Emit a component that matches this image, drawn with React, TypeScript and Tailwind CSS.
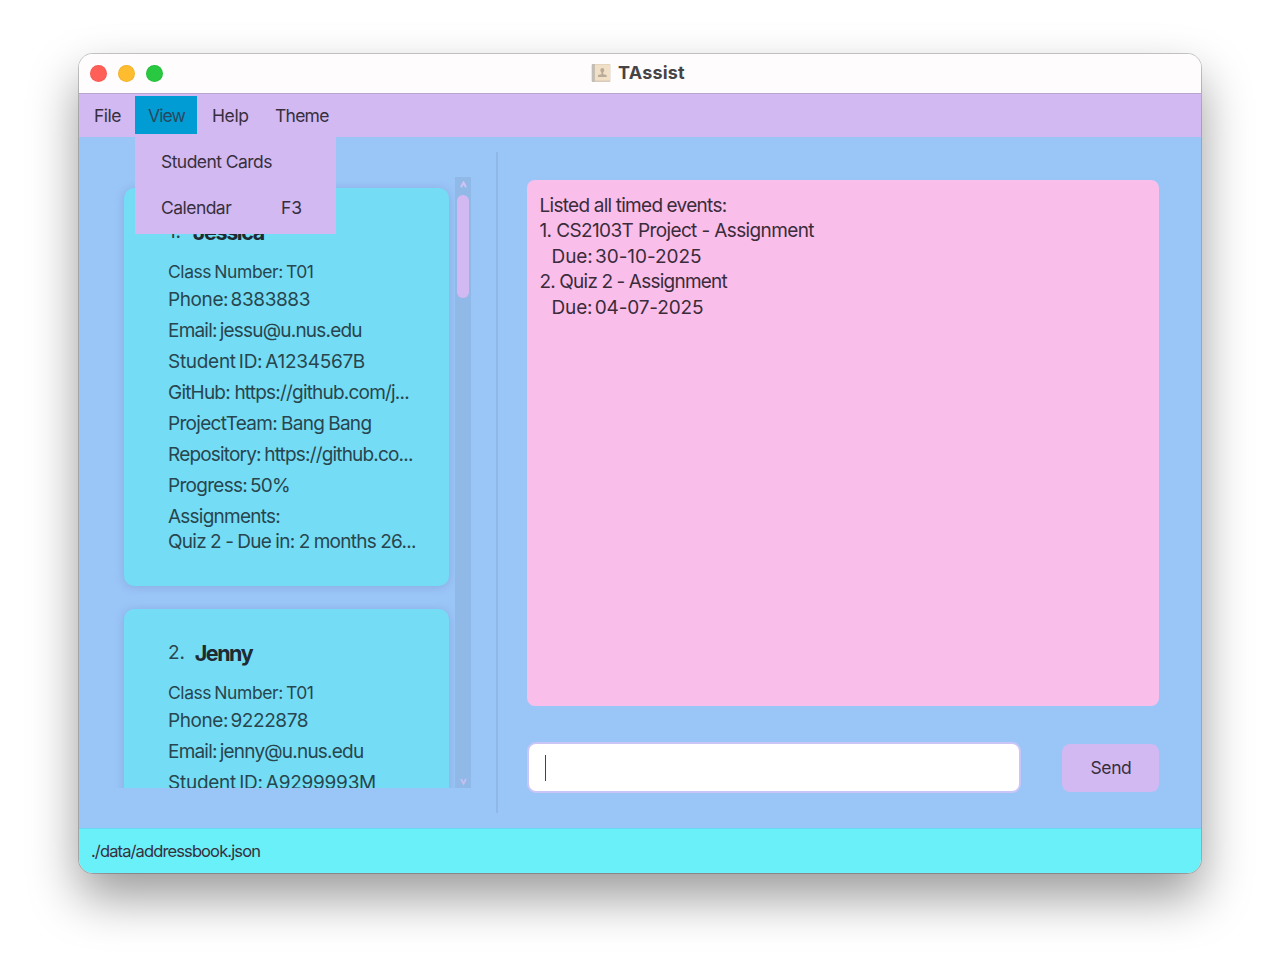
type Line = { text: string; className: string };
type Student = { index: string; name: string; nameClass: string; lines: Line[] };

const students: Student[] = [
  {
    index: '1.',
    name: 'Jessica',
    nameClass: 'ml-3 tracking-[-1.36px]',
    lines: [
      { text: 'Phone: 8383883', className: 'tracking-[-0.4px] [word-spacing:-2.5px]' },
      { text: 'Email: jessu@u.nus.edu', className: 'tracking-[-0.79px] [word-spacing:-1.5px]' },
      { text: 'Student ID: A1234567B', className: 'tracking-[-0.29px] [word-spacing:-2px]' },
      { text: 'GitHub: https://github.com/j...', className: 'tracking-[-0.8px]' },
      { text: 'ProjectTeam: Bang Bang', className: 'tracking-[-0.69px] [word-spacing:-0.7px]' },
      { text: 'Repository: https://github.co...', className: 'tracking-[-0.82px] [word-spacing:-1px]' },
      { text: 'Progress: 50%', className: 'tracking-[-0.71px] [word-spacing:-1.7px]' },
      { text: 'Assignments:', className: 'tracking-[-0.77px]' },
      { text: 'Quiz 2 - Due in: 2 months 26...', className: '-mt-1.5 tracking-[-0.74px] [word-spacing:-0.4px]' },
    ],
  },
  {
    index: '2.',
    name: 'Jenny',
    nameClass: 'ml-[10px] tracking-[-1.45px]',
    lines: [
      { text: 'Phone: 9222878', className: 'tracking-[-0.42px] [word-spacing:-2.5px]' },
      { text: 'Email: jenny@u.nus.edu', className: 'tracking-[-0.79px] [word-spacing:-1.5px]' },
      { text: 'Student ID: A9299993M', className: 'tracking-[-0.25px] [word-spacing:-2px]' },
    ],
  },
];

const messages: Line[] = [
  { text: 'Listed all timed events:', className: 'tracking-[-0.7px] [word-spacing:-0.4px]' },
  { text: '1. CS2103T Project - Assignment', className: 'tracking-[-0.62px]' },
  { text: 'Due: 30-10-2025', className: 'pl-3 tracking-[-0.06px] [word-spacing:-3px]' },
  { text: '2. Quiz 2 - Assignment', className: 'tracking-[-0.76px] [word-spacing:-0.3px]' },
  { text: 'Due: 04-07-2025', className: 'pl-3 tracking-[-0.16px] [word-spacing:-2.8px]' },
];

function AddressBookIcon() {
  return (
    <svg width="20" height="20" viewBox="0 0 20 20" aria-hidden="true">
      <rect x="0.8" y="1" width="18.6" height="18" rx="1" fill="#d9cbb9" />
      <rect x="4" y="1.5" width="15" height="16" rx="0.5" fill="#f1dfc6" />
      <rect x="0.8" y="1" width="3" height="18" rx="0.8" fill="#c3bdb5" />
      <ellipse cx="11.3" cy="7.2" rx="1.9" ry="2.3" fill="#b9ab9a" />
      <path d="M10.4 9h1.8v2.2l3.4.8v1.9H7V12l3.4-.8z" fill="#b9ab9a" />
    </svg>
  );
}

function TitleBar() {
  return (
    <div className="grid h-[39px] shrink-0 grid-cols-[1fr_auto_1fr] items-center bg-[#fefcfd]">
      <div className="flex gap-[11px] pl-[11px]">
        <span className="size-[17px] rounded-full bg-[#ff5f57] ring-1 ring-inset ring-black/5" />
        <span className="size-[17px] rounded-full bg-[#febc2e] ring-1 ring-inset ring-black/5" />
        <span className="size-[17px] rounded-full bg-[#28c840] ring-1 ring-inset ring-black/5" />
      </div>
      <div className="flex items-center gap-[7px] pb-0.5 pr-1">
        <AddressBookIcon />
        <span className="text-[18px] font-bold leading-6 tracking-[0.2px] text-[#464446]">TAssist</span>
      </div>
      <div />
    </div>
  );
}

function MenuBar() {
  return (
    <nav className="relative z-10 flex h-[44px] shrink-0 items-start border-t border-[#b9a5d0] bg-[#d2b9f2] pt-0.5 text-[17.5px] leading-10">
      <span className="w-14 pl-[15px] tracking-[-0.52px]">File</span>
      <div className="relative h-[38px] w-[62px] bg-[#019cd3] pl-[13px] tracking-[-0.93px] text-[#27485f]">
        View
        <div className="absolute left-0 top-[38px] h-[100px] w-[201px] bg-[#d2b9f2] px-[26px] pt-[5px] text-[#382f3e]">
          <div className="h-[46px] leading-[46px] tracking-[-0.55px]">Student Cards</div>
          <div className="flex h-[46px] leading-[46px]">
            <span className="w-[120px] tracking-[-0.54px]">Calendar</span>
            <span className="tracking-[-0.1px]">F3</span>
          </div>
        </div>
      </div>
      <span className="w-[64px] pl-[15px] tracking-[-0.39px]">Help</span>
      <span className="pl-[14px] tracking-[-0.75px]">Theme</span>
    </nav>
  );
}

function StudentCard({ student }: { student: Student }) {
  return (
    <article className="shrink-0 rounded-[10px] bg-[#74ddf5] pb-8 pl-11 pt-[30px] text-[#29454e] shadow-[0_1px_8px_rgba(110,130,190,0.4)]">
      <div className="flex h-7 items-center">
        <span className="text-[19px] tracking-[-0.2px]">{student.index}</span>
        <span className={`text-[21.5px] font-bold text-[#1f2a33] ${student.nameClass}`}>{student.name}</span>
      </div>
      <div className="mt-[13px] h-[25px] text-[17.5px] leading-[25px] tracking-[-0.43px] [word-spacing:-1.3px]">
        Class Number: T01
      </div>
      <div className="mt-[3px] flex flex-col gap-1.5 text-[19px] leading-[25px]">
        {student.lines.map((line) => (
          <div key={line.text} className={`whitespace-nowrap ${line.className}`}>{line.text}</div>
        ))}
      </div>
    </article>
  );
}

function ScrollBar() {
  return (
    <div className="flex w-4 flex-col items-center bg-[#91b9e7]">
      <div className="flex h-[18px] w-full items-center justify-center pb-1">
        <svg width="7" height="7" viewBox="0 0 7 7" aria-hidden="true">
          <path d="M1 6.2 3.5 1.5 6 6.2" fill="none" stroke="#d2c3f3" strokeWidth="1.9" />
        </svg>
      </div>
      <div className="h-[103px] w-3 rounded-md bg-[#d2b9f2]" />
      <div className="grow" />
      <div className="flex h-[14px] w-full items-center justify-center">
        <svg width="7" height="7" viewBox="0 0 7 7" aria-hidden="true">
          <path d="M1 1 3.5 5.7 6 1" fill="none" stroke="#c4bff1" strokeWidth="1.8" />
        </svg>
      </div>
    </div>
  );
}

function StudentList() {
  return (
    <section className="flex h-[611px] w-[357px] shrink-0">
      <div className="flex min-w-0 flex-1 flex-col gap-[23px] overflow-hidden pl-[10px] pr-[6px] pt-[11px]">
        {students.map((student) => (
          <StudentCard key={student.name} student={student} />
        ))}
      </div>
      <ScrollBar />
    </section>
  );
}

function CommandPanel() {
  return (
    <section className="flex grow flex-col pl-[29px] pr-[42px] pt-[43px]">
      <div className="h-[526px] rounded-[8px] bg-[#fabeea] py-[13px] pl-[12.5px] text-[19px] leading-[25.4px] text-[#3a2c3a]">
        {messages.map((line) => (
          <div key={line.text} className={line.className}>{line.text}</div>
        ))}
      </div>
      <div className="mt-9 flex items-center justify-between">
        <div className="flex h-[51px] w-[494px] items-center rounded-[9px] border-2 border-[#c9c5f7] bg-white pl-4">
          <span className="h-[26px] w-px bg-[#444]" />
        </div>
        <button className="mt-px h-12 w-[97px] rounded-[8px] bg-[#d2b9f2] pl-px text-[17.5px] tracking-[-0.4px] text-[#382f3e]">
          Send
        </button>
      </div>
    </section>
  );
}

export default function App() {
  return (
    <main className="h-[977px] overflow-hidden bg-white pl-[79px] pt-[54px] font-['Inter',sans-serif] text-[#382f3e]">
      <div className="h-[818.5px] w-[1122px] rounded-[14px] shadow-[0_0_0_1px_rgba(0,0,0,0.2),0_24px_50px_rgba(0,0,0,0.4)]">
        <div className="flex h-full flex-col overflow-hidden rounded-[14px]">
          <TitleBar />
          <MenuBar />
          <div className="flex min-h-0 grow bg-[#9ac5f7]">
            <div className="w-[417px] shrink-0 pl-[35px] pt-10">
              <StudentList />
            </div>
            <div className="mt-[15px] h-[661px] w-0.5 shrink-0 bg-[#8fb8e9]" />
            <CommandPanel />
          </div>
          <footer className="h-[44.5px] shrink-0 border-t border-[#6bd8f3] bg-[#69f0f9] pl-3 text-[16.5px] leading-[45px] tracking-[-0.88px]">
            ./data/addressbook.json
          </footer>
        </div>
      </div>
    </main>
  );
}
